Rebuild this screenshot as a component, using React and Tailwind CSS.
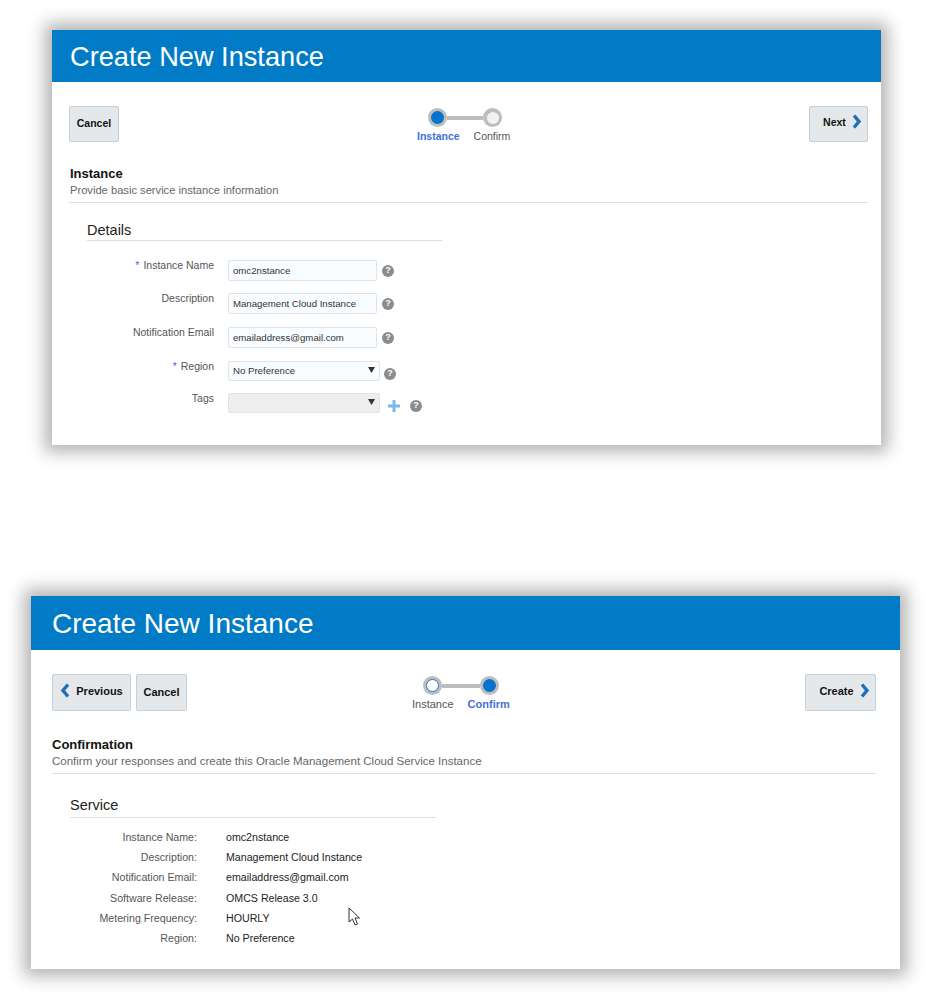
const Chevron = ({ left = false }) => (
  <svg width="10" height="15" viewBox="0 0 10 15" className="mb-[2px] shrink-0">
    <path d={left ? "M8 1.5 L3 7.5 L8 13.5" : "M2 1.5 L7 7.5 L2 13.5"} fill="none" stroke="#1f6fb5" strokeWidth="3.4" />
  </svg>
);

const Help = ({ className = "" }) => (
  <span className={`flex h-[12px] w-[12px] shrink-0 items-center justify-center rounded-full bg-[#8a8d90] text-[9px] font-bold leading-none text-white ${className}`}>?</span>
);

const Caret = () => (
  <svg width="7" height="6" viewBox="0 0 7 6" className="mb-[3px] mr-px shrink-0">
    <path d="M0 0 H7 L3.5 6 Z" fill="#333" />
  </svg>
);

const Button = ({ className, children }) => (
  <div className={`flex shrink-0 items-center justify-center rounded-[2px] border border-[#c6d0d9] bg-[#e5e8eb] font-bold text-[#111] ${className}`}>
    {children}
  </div>
);

const Step = ({ state }) => (
  <span className="flex h-[19px] w-[19px] shrink-0 items-center justify-center rounded-full bg-[#bdbdbd]">
    {state === "active" && <span className="h-[13px] w-[13px] rounded-full bg-[#0572ce]" />}
    {state === "todo" && <span className="h-[12px] w-[12px] rounded-full bg-[#f0f2f4]" />}
    {state === "done" && <span className="h-[13px] w-[13px] rounded-full border border-[#2a7ac7] bg-white" />}
  </span>
);

const Stepper = ({ first, className, lineClass, labelClass }) => (
  <div className={`flex shrink-0 flex-col ${className}`}>
    <div className="ml-[11px] flex items-center">
      <Step state={first ? "active" : "done"} />
      <span className={`h-[4px] bg-[#bdbdbd] ${lineClass}`} />
      <Step state={first ? "todo" : "active"} />
    </div>
    <div className={`flex leading-[13px] ${labelClass}`}>
      <span className={first ? "font-bold text-[#3f72d8]" : "text-[#555]"}>Instance</span>
      <span className={first ? "text-[#555]" : "font-bold text-[#3f72d8]"}>Confirm</span>
    </div>
  </div>
);

const Field = ({ label, req, className, children }) => (
  <div className={`flex items-start ${className}`}>
    <div className="-mt-px flex w-[145px] justify-end text-[10.5px] leading-[12px] text-[#555]">
      {req && <span className="mr-[4px] text-[#3f72d8]">*</span>}
      {label}
    </div>
    <div className="ml-[14px] flex items-center">{children}</div>
  </div>
);

const Input = ({ children }) => (
  <div className="flex h-[21px] w-[149px] items-center rounded-[2px] border border-[#dfe4ea] bg-[#f9fcff] pl-[4px] pt-px text-[9.65px] text-[#333]">
    {children}
  </div>
);

const Select = ({ disabled, children }) => (
  <div className={`flex h-[20px] w-[152px] items-center justify-between rounded-[2px] border border-[#dfe4ea] pl-[4px] pr-[3px] text-[9.65px] text-[#333] ${disabled ? "bg-[#eeeeef]" : "bg-[#f9fcff]"}`}>
    <span>{children}</span>
    <Caret />
  </div>
);

const Summary = ({ label, value }) => (
  <div className="flex h-[20.2px] items-center text-[10.65px]">
    <span className="w-[145px] text-right text-[#555]">{label}</span>
    <span className="ml-[29px] text-[#222]">{value}</span>
  </div>
);

export default function App() {
  return (
    <div className="relative h-[997px] w-[929px] overflow-hidden bg-white pt-[30px] font-['Liberation_Sans',Arial,sans-serif]">
      <section className="ml-[52px] h-[415px] w-[829px] bg-white shadow-[0_0_16px_7px_rgba(0,0,0,0.3)]">
        <header className="flex h-[52px] items-center bg-[#027bc6] pl-[18px] pt-[2px] text-[27.2px] text-white">Create New Instance</header>
        <div className="pl-[17px] pr-[13px]">
          <div className="mt-[24px] flex items-start">
            <Button className="h-[36px] w-[50px] pb-px text-[10.5px]">Cancel</Button>
            <Stepper first className="ml-[298px] mt-[2px]" lineClass="w-[36px]" labelClass="mt-[3px] gap-[14px] text-[10.5px]" />
            <Button className="ml-auto h-[36px] w-[59px] gap-[6px] pb-[3px] pl-[8px] text-[10.5px]">Next <Chevron /></Button>
          </div>
          <h2 className="ml-px mt-[24px] text-[13px] font-bold leading-[14px] text-[#111]">Instance</h2>
          <p className="ml-px mt-[2px] text-[11.16px] leading-[14px] text-[#666]">Provide basic service instance information</p>
          <div className="mt-[5px] h-px w-full bg-[#d6dfe6]" />
          <div className="ml-[18px] w-[355px]">
            <h3 className="mt-[19px] text-[14.5px] leading-[17px] text-[#222]">Details</h3>
            <div className="mt-[1px] h-px w-full bg-[#d6dfe6]" />
          </div>
          <div className="pt-[19px]">
            <Field label="Instance Name" req><Input>omc2nstance</Input><Help className="ml-[5px]" /></Field>
            <Field label="Description" className="mt-[12px]"><Input>Management Cloud Instance</Input><Help className="ml-[5px]" /></Field>
            <Field label="Notification Email" className="mt-[13px]"><Input>emailaddress@gmail.com</Input><Help className="ml-[5px]" /></Field>
            <Field label="Region" req className="mt-[13px]"><Select>No Preference</Select><Help className="ml-[4px] mt-[5px]" /></Field>
            <Field label="Tags" className="mt-[12px]">
              <Select disabled>{"\u00a0"}</Select>
              <svg width="14" height="14" viewBox="0 0 14 14" className="ml-[7px] mt-[5px]">
                <path d="M7 1 V13 M1 7 H13" stroke="#7db7e8" strokeWidth="3" />
              </svg>
              <Help className="ml-[9px] mt-[5px]" />
            </Field>
          </div>
        </div>
      </section>

      <section className="ml-[31px] mt-[151px] h-[373px] w-[869px] bg-white shadow-[0_0_16px_7px_rgba(0,0,0,0.3)]">
        <header className="flex h-[54px] items-center bg-[#027bc6] pl-[21px] pt-[2px] text-[28px] text-white">Create New Instance</header>
        <div className="pl-[21px] pr-[24px]">
          <div className="mt-[24px] flex items-start">
            <Button className="h-[37px] w-[79px] gap-[6px] pb-[2px] text-[11px]"><Chevron left /> Previous</Button>
            <Button className="ml-[5px] h-[37px] w-[51px] text-[11px]">Cancel</Button>
            <Stepper className="ml-[225px] mt-[2px]" lineClass="w-[38px]" labelClass="mt-[3px] gap-[14px] text-[11px]" />
            <Button className="ml-auto h-[37px] w-[71px] gap-[6px] pb-[2px] pl-[8px] text-[11px]">Create <Chevron /></Button>
          </div>
          <h2 className="mt-[27px] text-[13px] font-bold leading-[14px] text-[#111]">Confirmation</h2>
          <p className="mt-[2px] text-[11.5px] leading-[14px] text-[#666]">Confirm your responses and create this Oracle Management Cloud Service Instance</p>
          <div className="mt-[5px] h-px w-full bg-[#d6dfe6]" />
          <div className="ml-[18px] w-[366px]">
            <h3 className="mt-[23px] text-[14.5px] leading-[17px] text-[#222]">Service</h3>
            <div className="mt-[3px] h-px w-full bg-[#dcdfe8]" />
          </div>
          <div className="pt-[10px]">
            <Summary label="Instance Name:" value="omc2nstance" />
            <Summary label="Description:" value="Management Cloud Instance" />
            <Summary label="Notification Email:" value="emailaddress@gmail.com" />
            <Summary label="Software Release:" value="OMCS Release 3.0" />
            <Summary label="Metering Frequency:" value="HOURLY" />
            <Summary label="Region:" value="No Preference" />
          </div>
        </div>
      </section>

      <svg width="13" height="20" viewBox="0 0 13 20" className="absolute left-[348px] top-[907px]">
        <path d="M1 1 V15 L4.5 12 L7 18 L9.5 17 L7 11 H11.5 Z" fill="#fff" stroke="#333" strokeWidth="1" />
      </svg>
    </div>
  );
}
